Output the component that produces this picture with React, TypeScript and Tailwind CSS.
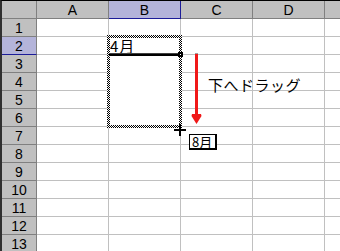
import React from 'react';

const cols = ['A', 'B', 'C', 'D', ''];
const rows = [1, 2, 3, 4, 5, 6, 7, 8, 9, 10, 11, 12, 13];

const headCell =
  'bg-[#c0c0c0] border-r border-b border-[#808080] flex items-center justify-center text-[14px] leading-none';

const App = () => {
  return (
    <div className="relative w-[340px] h-[251px] overflow-hidden bg-white border-t border-l-2 border-t-black border-l-[#303030] font-['Liberation_Sans',sans-serif] text-black">
      {/* Sheet grid */}
      <div className="grid grid-cols-[35px_72px_72px_72px_72px_72px] grid-rows-[repeat(14,18px)]">
        <div className={headCell} />
        {cols.map((c) => (
          <div
            key={c || 'E'}
            className={
              c === 'B'
                ? 'bg-[#b4b4da] border-r border-b border-[#1c1c98] flex items-center justify-center text-[14px] leading-none'
                : headCell
            }
          >
            {c}
          </div>
        ))}
        {rows.map((r) => (
          <React.Fragment key={r}>
            <div
              className={
                r === 2
                  ? 'bg-[#b4b4da] border-r border-r-[#808080] border-b border-b-[#1c1c98] flex items-center justify-center text-[14px] leading-none'
                  : headCell
              }
            >
              {r}
            </div>
            {cols.map((c) => {
              const inRange = c === 'B' && r >= 2 && r <= 5;
              return (
                <div
                  key={c || 'E'}
                  className={
                    inRange
                      ? 'border-r border-[#c0c0c0] border-b border-b-white flex items-end'
                      : 'border-r border-b border-[#c0c0c0]'
                  }
                >
                  {c === 'B' && r === 2 && (
                    <span className="pl-[1px] text-[15px] leading-[16px] tracking-[1px] font-['Noto_Sans_CJK_JP',sans-serif]">
                      4月
                    </span>
                  )}
                </div>
              );
            })}
          </React.Fragment>
        ))}
      </div>

      {/* Marquee around B2:B6 with active cell edge and fill handle */}
      <svg className="absolute left-[105px] top-[34px]" width="76" height="93" viewBox="0 0 76 93">
        <defs>
          <pattern id="chk" width="2" height="2" patternUnits="userSpaceOnUse">
            <rect width="2" height="2" fill="#fff" />
            <rect width="1" height="1" fill="#000" />
            <rect x="1" y="1" width="1" height="1" fill="#000" />
          </pattern>
        </defs>
        <path d="M0 0H75V93H0Z M3 3V90H72V3Z" fill="url(#chk)" fillRule="evenodd" />
        <rect x="2" y="18" width="70" height="1" fill="#404040" />
        <rect x="2" y="19" width="70" height="2" fill="#000" />
        <rect x="71" y="17" width="5" height="5" fill="#000" />
        <rect x="73" y="19" width="1" height="1" fill="#fff" />
      </svg>

      {/* Drag arrow and note */}
      <div className="absolute left-[188px] top-[52px] flex items-start gap-[4px]">
        <svg width="14" height="76" viewBox="0 0 14 76">
          <rect x="5" y="0" width="3" height="1" fill="#a0a0a0" />
          <rect x="5" y="1" width="3" height="62" fill="#f01818" />
          <path d="M2 61 L11 61 L11.5 63 L6.5 71 L1.5 63 Z" fill="#f01818" />
        </svg>
        <span className="mt-[23px] text-[15px] leading-[18px] tracking-[0.5px] font-['Noto_Sans_CJK_JP',sans-serif]">
          下へドラッグ
        </span>
      </div>

      {/* Fill cursor */}
      <svg className="absolute left-[172px] top-[123px]" width="12" height="12" viewBox="0 0 12 12">
        <rect x="0" y="5" width="12" height="2" fill="#000" />
        <rect x="5" y="0" width="2" height="12" fill="#000" />
      </svg>

      {/* Tooltip */}
      <div className="absolute left-[187px] top-[133px] w-[28px] h-[16px] bg-white border border-black border-r-2 border-b-2 flex items-center pl-[2px] text-[13px] leading-none font-['Noto_Sans_CJK_JP',sans-serif]">
        8月
      </div>
    </div>
  );
};

export default App;
